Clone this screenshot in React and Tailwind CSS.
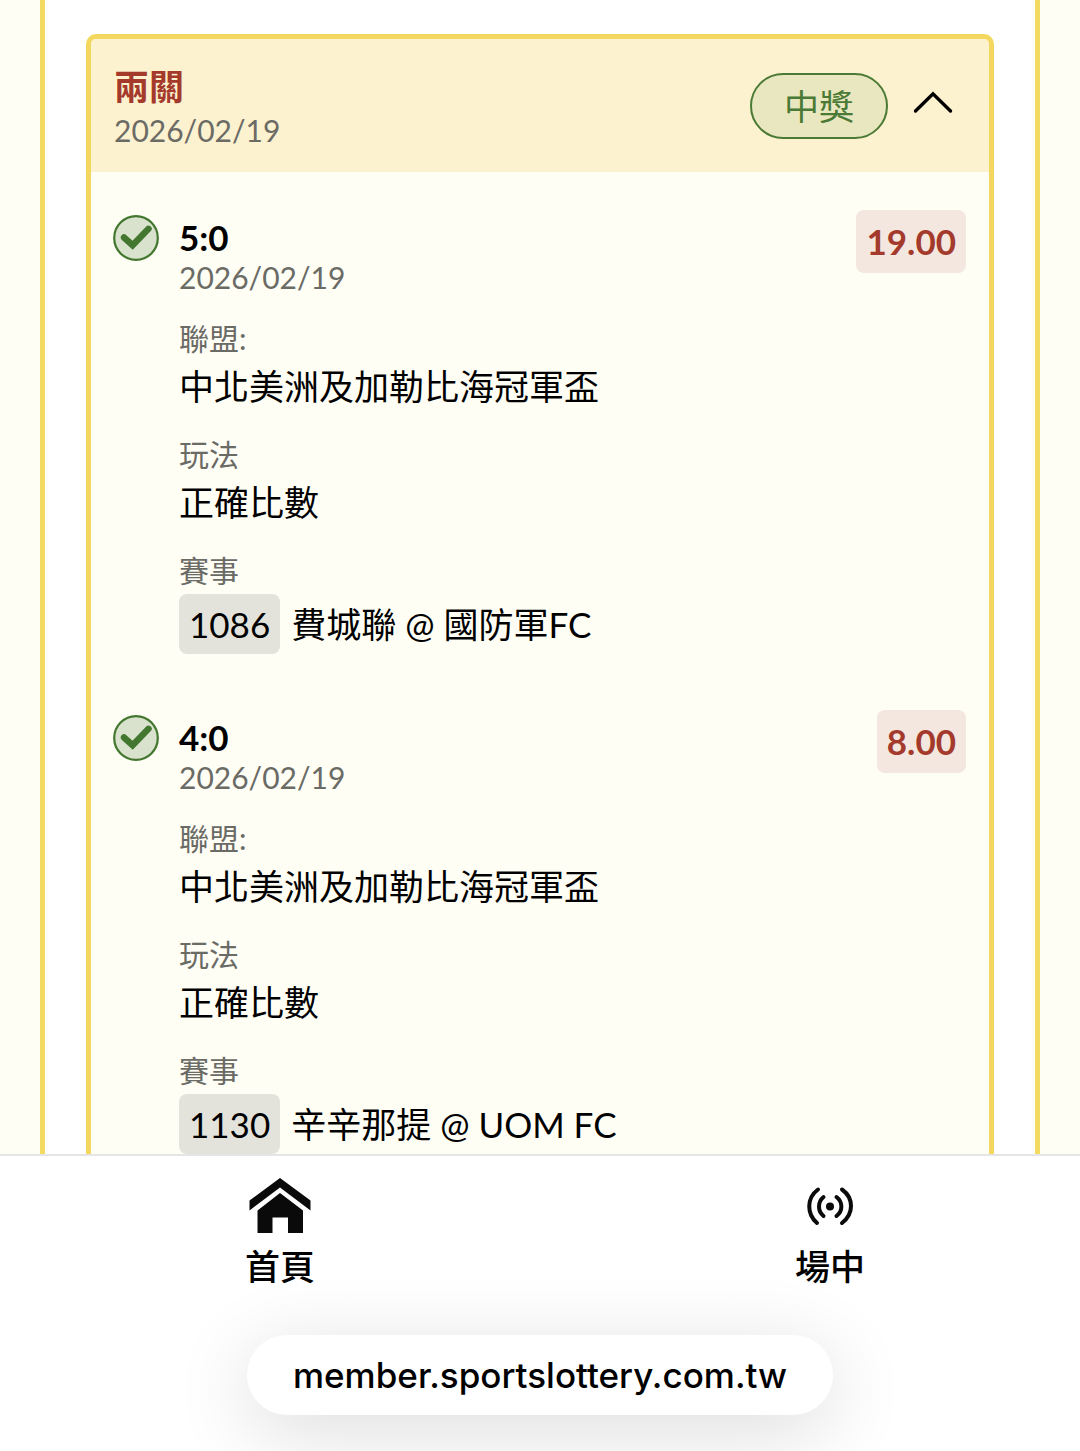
import { useState } from "react"

const bets = [
  {
    id: 1,
    score: "5:0",
    date: "2026/02/19",
    odds: "19.00",
    league: "中北美洲及加勒比海冠軍盃",
    market: "正確比數",
    code: "1086",
    match: "費城聯 @ 國防軍FC",
  },
  {
    id: 2,
    score: "4:0",
    date: "2026/02/19",
    odds: "8.00",
    league: "中北美洲及加勒比海冠軍盃",
    market: "正確比數",
    code: "1130",
    match: "辛辛那提 @ UOM FC",
  },
]

const styles = {
  font: "font-['Lato','Noto_Sans_CJK_TC',sans-serif]",
  date: "text-[30px] leading-[40px] text-[#6b6b66]",
  label: "text-[30px] leading-[46px] text-[#6b6b66]",
  value: "text-[35px] leading-[50px]",
}

const CheckIcon = () => (
  <svg viewBox="0 0 46 46" className="w-[46px] h-[46px] shrink-0 mt-[5px]" aria-hidden="true">
    <circle cx="23" cy="23" r="21.8" fill="#d8e2cc" stroke="#43762f" strokeWidth="2.2" />
    <path d="M11 22.5L19.6 30.2L35.5 13.8" fill="none" stroke="#43762f" strokeWidth="6.4" strokeLinecap="round" />
  </svg>
)

const ChevronIcon = ({ open }) => (
  <svg
    viewBox="0 0 40 32"
    className={`w-[40px] h-[32px] ${open ? "" : "rotate-180"}`}
    fill="none"
    stroke="#000"
    strokeWidth="3.4"
    strokeLinecap="round"
    aria-hidden="true"
  >
    <path d="M2.500 21L20 3.800L37.500 21" />
  </svg>
)

const HomeIcon = () => (
  <svg viewBox="0 0 62 56" className="w-[62px] h-[56px]" fill="#0a0a0a" aria-hidden="true">
    <path d="M31 0L61.500 22.500V32.500L31 9.500L0.500 32.500V22.500Z" />
    <path d="M31 15L54 32.500V55H39V39.500H23.500V55H8.500V32.500Z" />
  </svg>
)

const LiveIcon = () => (
  <svg
    viewBox="0 0 48 56"
    className="w-[48px] h-[56px]"
    fill="none"
    stroke="#0a0a0a"
    strokeWidth="4"
    strokeLinecap="round"
    aria-hidden="true"
  >
    <path d="M12 11.500C0.500 20 0.500 36 11 45" />
    <path d="M36 11.500C48 20 48 36 36 45" />
    <path d="M17.500 19C11.500 24 11.500 33 17.500 38" />
    <path d="M30.500 19C37 24 37 33 30.500 38" />
    <circle cx="24" cy="28.500" r="4" fill="#0a0a0a" stroke="none" />
  </svg>
)

const BetItem = ({ bet }) => (
  <li className="flex items-start gap-5">
    <CheckIcon />
    <div className="flex-1 pt-[7px]">
      <h3 className="text-[35px] leading-[40px] font-bold">{bet.score}</h3>
      <p className={styles.date}>{bet.date}</p>
      <dl className="mt-[18px]">
        <dt className={styles.label}>聯盟:</dt>
        <dd className={`${styles.value} mb-5`}>{bet.league}</dd>
        <dt className={styles.label}>玩法</dt>
        <dd className={`${styles.value} mb-5`}>{bet.market}</dd>
        <dt className={styles.label}>賽事</dt>
        <dd className="flex items-center gap-[11px] mt-px text-[35px] leading-[60px]">
          <span className="px-[10px] rounded-lg bg-[#e3e3dc]">{bet.code}</span>
          <span>{bet.match}</span>
        </dd>
      </dl>
    </div>
    <span className="px-[10px] rounded-lg bg-[#f3e7df] text-[#a43a2c] text-[35px] leading-[63px] font-bold">
      {bet.odds}
    </span>
  </li>
)

const App = () => {
  const [open, setOpen] = useState(true)

  return (
    <div className={`${styles.font} min-h-screen flex flex-col bg-[#fffef5] text-black`}>
      {/* Bet slip */}
      <main className="flex-1 flex flex-col mx-10 px-[41px] pt-[34px] border-x-5 border-[#f3da62] bg-white">
        <section className="flex-1 border-5 border-b-0 border-[#f3d75e] rounded-t-[10px] bg-[#fffef5]">
          <header className="flex items-center justify-between h-[133px] px-[23px] rounded-t-[5px] bg-[#fdf2cf]">
            <div>
              <h2 className="text-[35px] leading-[48px] font-bold text-[#a43a2c]">兩關</h2>
              <p className={styles.date}>2026/02/19</p>
            </div>
            <div className="flex items-center gap-[25px] pr-[13px]">
              <span className="px-8 rounded-full border-2 border-[#4a7a35] bg-[#e9e7bf] text-[#4a7a35] text-[35px] leading-[62px]">
                中獎
              </span>
              <button type="button" aria-label="收合" aria-expanded={open} onClick={() => setOpen(!open)}>
                <ChevronIcon open={open} />
              </button>
            </div>
          </header>

          {open && (
            <ul className="flex flex-col gap-[56px] pl-[22px] pr-[23px] pt-[38px]">
              {bets.map((bet) => (
                <BetItem key={bet.id} bet={bet} />
              ))}
            </ul>
          )}
        </section>
      </main>

      {/* Bottom navigation */}
      <footer className="border-t-2 border-[#e5e5e5] bg-white pt-[22px] pb-9 overflow-hidden">
        <nav className="flex justify-between pl-[245px] pr-[215px] text-[35px] leading-[46px] font-medium">
          <a href="#home" className="flex flex-col items-center gap-[9px]">
            <HomeIcon />
            首頁
          </a>
          <a href="#live" className="flex flex-col items-center gap-[9px]">
            <LiveIcon />
            場中
          </a>
        </nav>
        <div className="flex justify-center mt-[46px]">
          <button
            type="button"
            className="h-20 px-[46px] rounded-full bg-white font-['Inter',sans-serif] text-[35px] font-medium shadow-[0_16px_80px_rgba(0,0,0,0.14)]"
          >
            member.sportslottery.com.tw
          </button>
        </div>
      </footer>
    </div>
  )
}

export default App
